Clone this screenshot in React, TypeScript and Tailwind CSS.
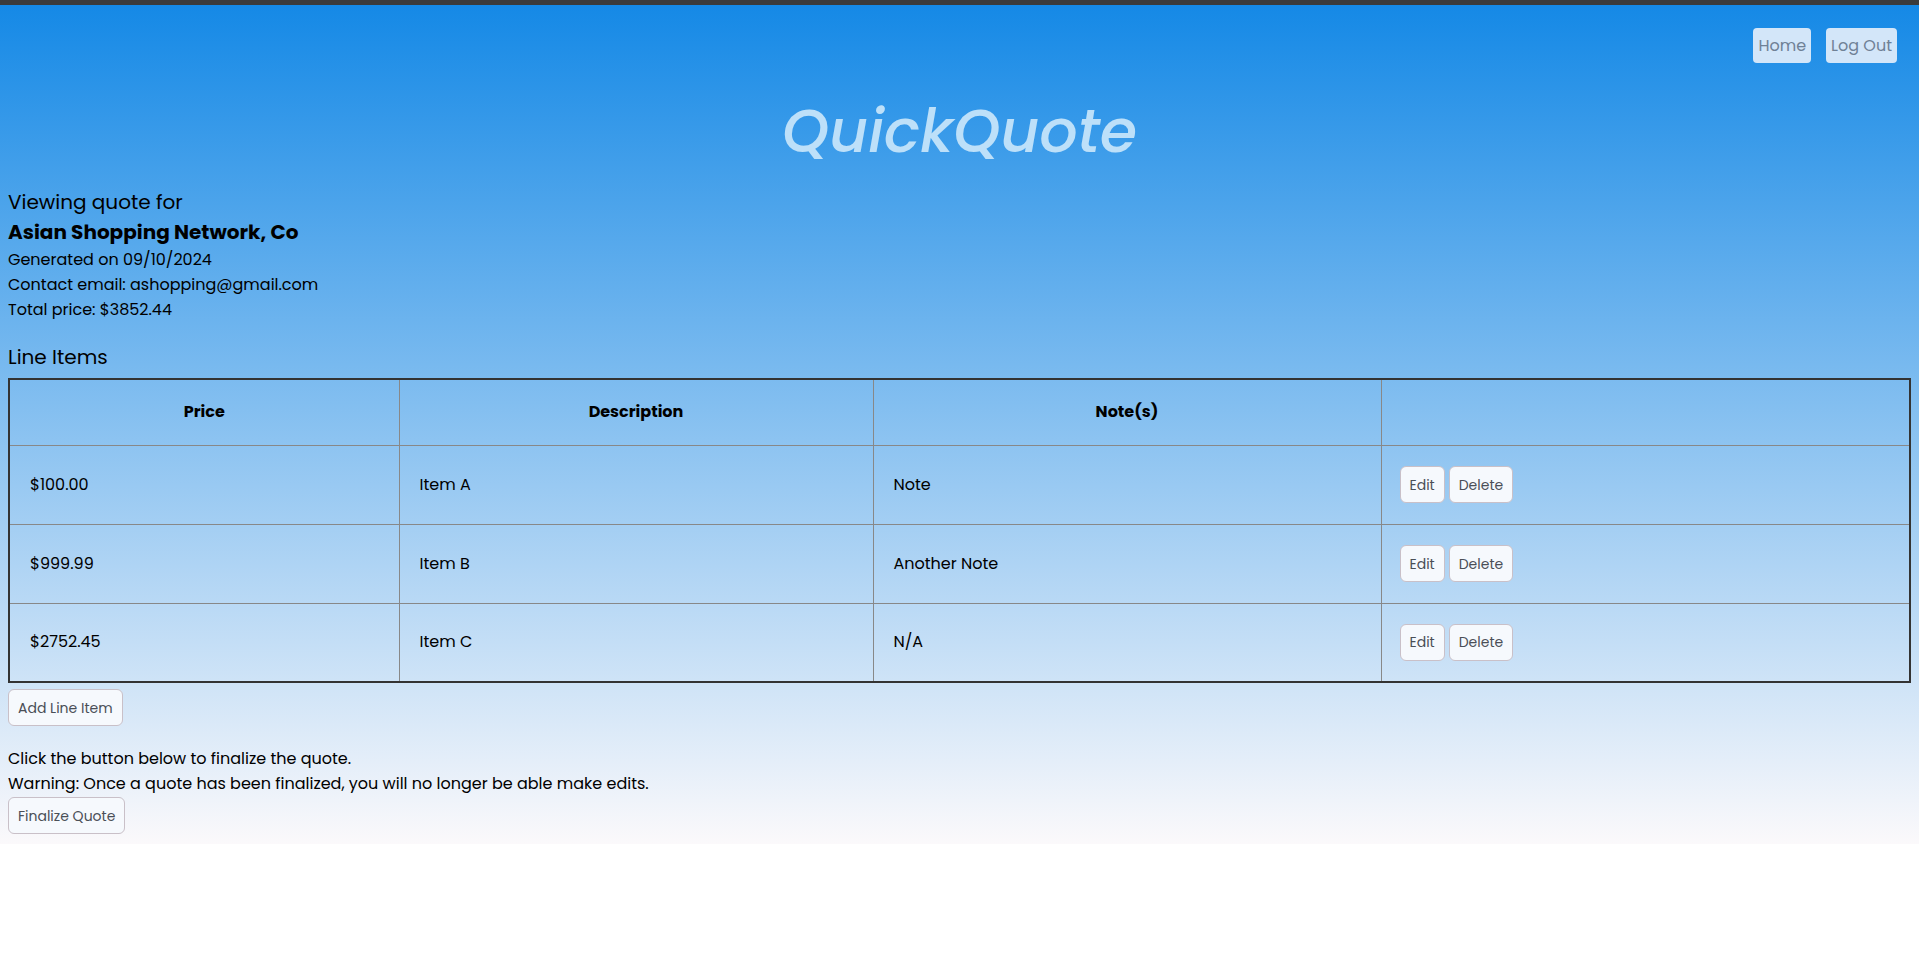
import React from "react";

const rows = [
  { price: "$100.00", desc: "Item A", note: "Note" },
  { price: "$999.99", desc: "Item B", note: "Another Note" },
  { price: "$2752.45", desc: "Item C", note: "N/A" },
];

const smallBtn =
  "h-[37px] px-[9px] rounded-[6px] border border-[#c9c0c8] bg-[#f6f9fd] text-[14px] text-[#4a4f57] leading-none";

export default function App() {
  return (
    <div className="min-h-[963px] bg-white font-['Poppins','Open_Sans',sans-serif] text-black">
      <div className="h-[5px] bg-[#3b3b3b]" />
      <div className="bg-[linear-gradient(to_bottom,#1589e6,#fbf9fb)] px-[8px] pb-[10px] h-[839px]">
        <div className="flex justify-end gap-[15px] pt-[23px] pr-[14px]">
          <button className="h-[35px] px-[5px] rounded-[4px] bg-[#d3e6f9] text-[16px] text-[#6f8196]">
            Home
          </button>
          <button className="h-[35px] px-[5px] rounded-[4px] bg-[#d3e6f9] text-[16px] text-[#6f8196]">
            Log Out
          </button>
        </div>
        <h1 className="text-center italic font-medium text-[60px] leading-[72px] text-[#bde0f9] mt-[32px]">
          QuickQuote
        </h1>
        <div className="mt-[20px] text-[20px] leading-[30px]">Viewing quote for</div>
        <div className="text-[20px] leading-[30px] font-bold">Asian Shopping Network, Co</div>
        <div className="text-[16px] leading-[25px]">Generated on 09/10/2024</div>
        <div className="text-[16px] leading-[25px]">Contact email: ashopping@gmail.com</div>
        <div className="text-[16px] leading-[25px]">Total price: $3852.44</div>
        <div className="mt-[20px] text-[20px] leading-[30px]">Line Items</div>
        <table className="w-full border-collapse border-2 border-[#333] text-[16px] mt-[6px]">
          <thead>
            <tr className="h-[66px]">
              <th className="border border-[#888] px-[20px] py-[20px] font-bold w-[390px]">Price</th>
              <th className="border border-[#888] px-[20px] py-[20px] font-bold w-[474px]">Description</th>
              <th className="border border-[#888] px-[20px] py-[20px] font-bold w-[508px]">Note(s)</th>
              <th className="border border-[#888] px-[20px] py-[20px]"></th>
            </tr>
          </thead>
          <tbody>
            {rows.map((r) => (
              <tr key={r.price} className="h-[79px]">
                <td className="border border-[#888] px-[20px] py-[20px]">{r.price}</td>
                <td className="border border-[#888] px-[20px] py-[20px]">{r.desc}</td>
                <td className="border border-[#888] px-[20px] py-[20px]">{r.note}</td>
                <td className="border border-[#888] pl-[18px] pr-[20px] py-[20px]">
                  <div className="flex gap-[4px]">
                    <button className={smallBtn}>Edit</button>
                    <button className={smallBtn}>Delete</button>
                  </div>
                </td>
              </tr>
            ))}
          </tbody>
        </table>
        <button className={smallBtn + " mt-[6px]"}>Add Line Item</button>
        <div className="mt-[20px] text-[16px] leading-[25px]">Click the button below to finalize the quote.</div>
        <div className="text-[16px] leading-[25px]">
          Warning: Once a quote has been finalized, you will no longer be able make edits.
        </div>
        <button className={smallBtn + " mt-[1px]"}>Finalize Quote</button>
      </div>
    </div>
  );
}
